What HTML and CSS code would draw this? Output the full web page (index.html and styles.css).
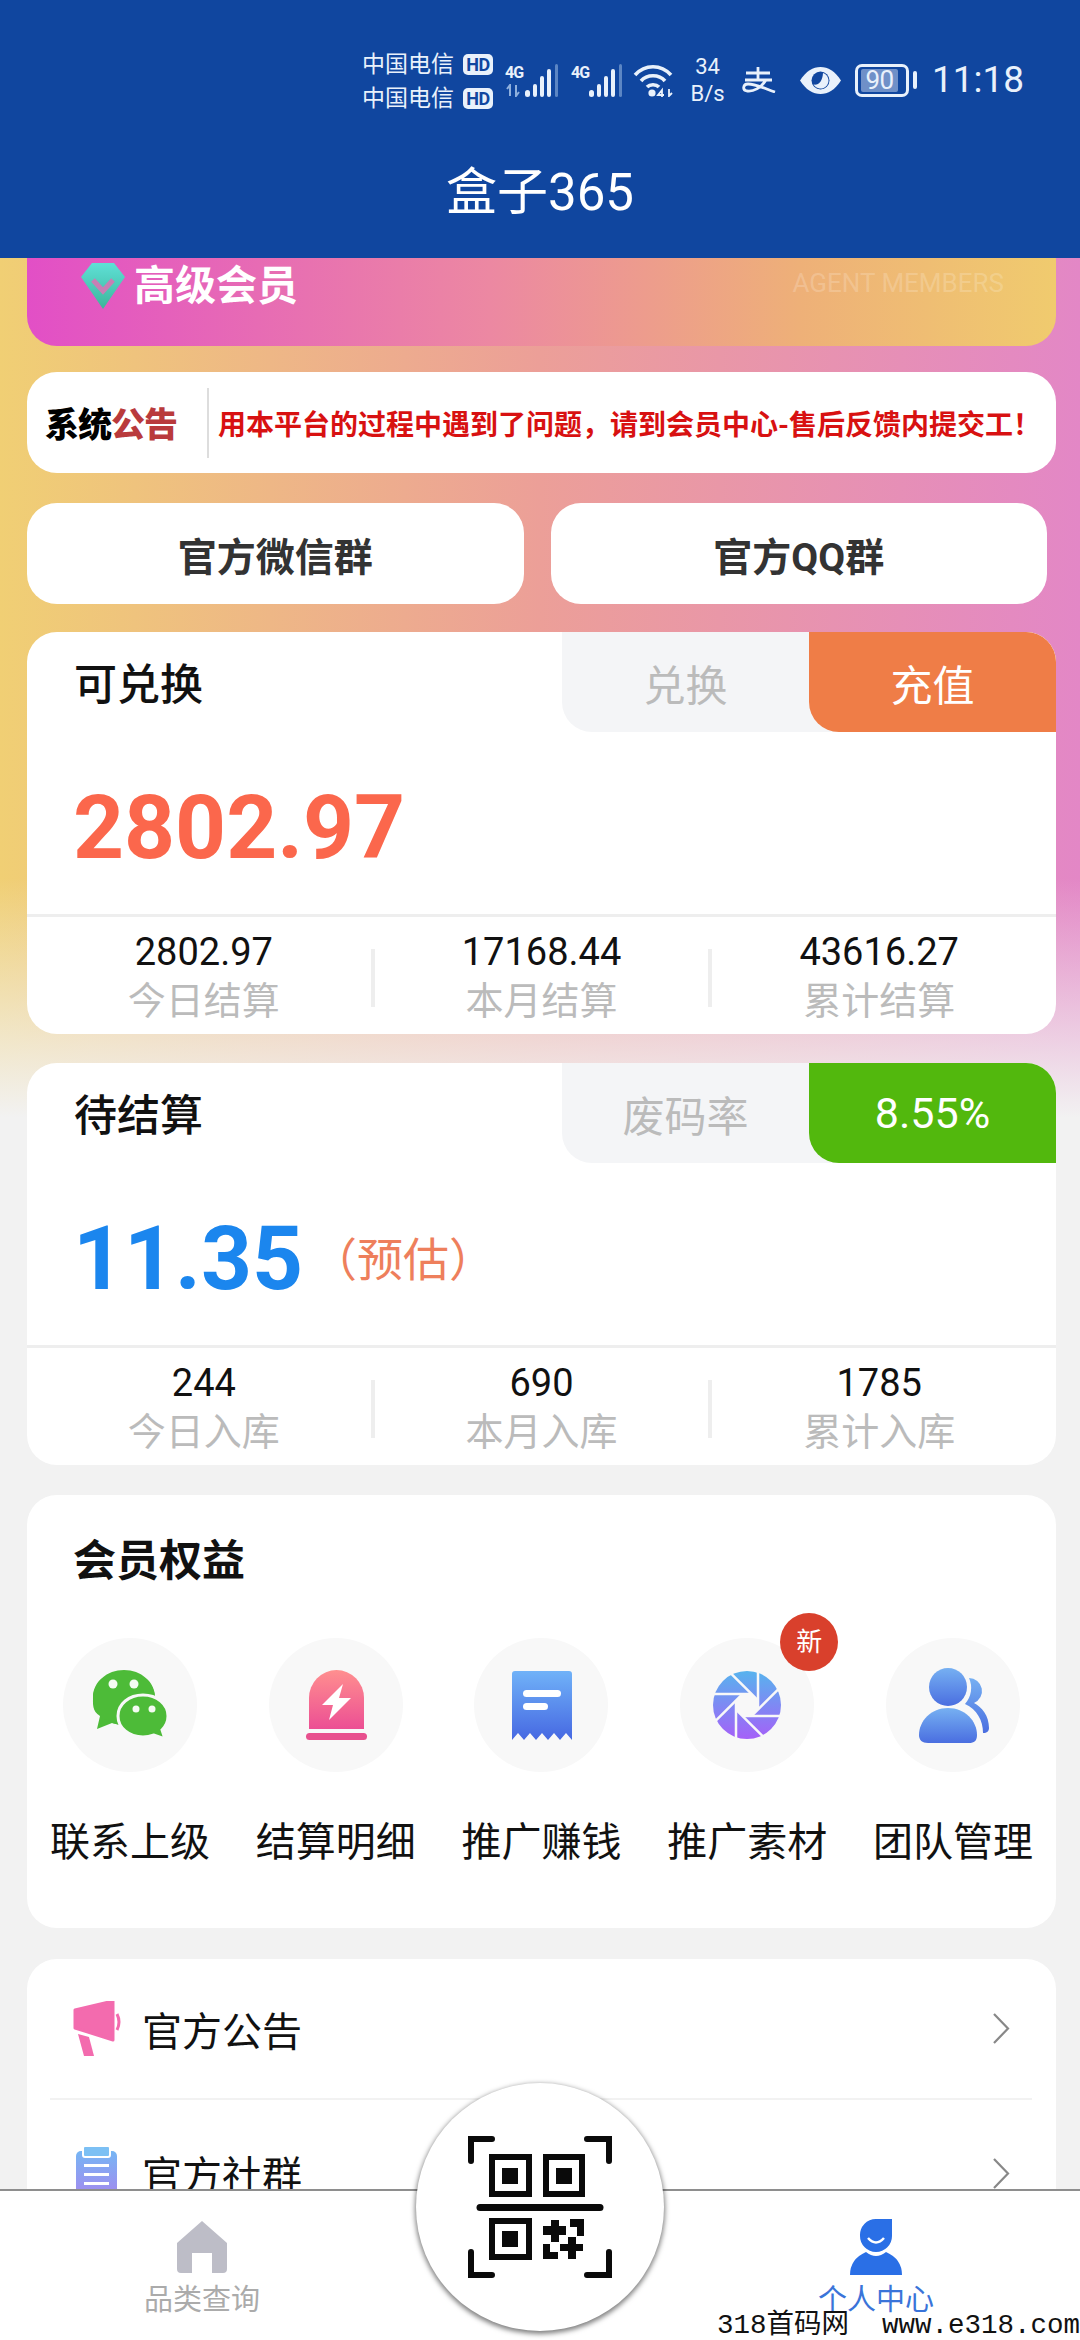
FILE: index.html
```html
<!DOCTYPE html>
<html lang="zh">
<head>
<meta charset="utf-8">
<title>盒子365</title>
<link rel="stylesheet" href="styles.css">
</head>
<body>
<div class="app">
  <header class="header">
    <div class="status">
      <div class="carriers">
        <div class="carrier"><span>中国电信</span><b class="hd">HD</b></div>
        <div class="carrier"><span>中国电信</span><b class="hd">HD</b></div>
      </div>
      <div class="sim">
        <div class="sim-tag"><span class="g4">4G</span>
          <svg class="arrows" width="19" height="13" viewBox="0 0 19 13"><path d="M5 12V1L2 5M11 1v11l3-4" fill="none" stroke="#8fb0dd" stroke-width="2"/></svg>
        </div>
        <svg class="bars" width="35" height="33" viewBox="0 0 35 33"><rect x="1" y="26" width="5" height="7" rx="2.5" fill="#e9f1fb"/><rect x="9" y="20" width="4" height="13" rx="2" fill="#e9f1fb"/><rect x="16" y="12" width="4" height="21" rx="2" fill="#e9f1fb"/><rect x="23" y="5" width="4" height="28" rx="2" fill="#e9f1fb"/><rect x="31" y="0" width="3" height="33" rx="1.5" fill="#5c86c4"/></svg>
      </div>
      <div class="sim sim-two">
        <div class="sim-tag"><span class="g4">4G</span></div>
        <svg class="bars" width="35" height="33" viewBox="0 0 35 33"><rect x="1" y="26" width="5" height="7" rx="2.5" fill="#e9f1fb"/><rect x="9" y="20" width="4" height="13" rx="2" fill="#e9f1fb"/><rect x="16" y="12" width="4" height="21" rx="2" fill="#e9f1fb"/><rect x="23" y="5" width="4" height="28" rx="2" fill="#e9f1fb"/><rect x="31" y="0" width="3" height="33" rx="1.5" fill="#5c86c4"/></svg>
      </div>
      <svg class="wifi" width="41" height="33" viewBox="0 0 41 33"><g fill="none" stroke="#e9f1fb" stroke-width="3.6"><path d="M2 11C12 0 28 0 38 11"/><path d="M8 17C14 10 26 10 32 17"/><path d="M14 23c3-3 9-3 12 0"/></g><circle cx="19" cy="29" r="3.6" fill="#e9f1fb"/><path d="M29 33v-7l-4 5h6M36 25v7l3-3" fill="none" stroke="#e9f1fb" stroke-width="1.8"/></svg>
      <div class="speed"><span>34</span><span>B/s</span></div>
      <svg class="pay" width="34" height="26" viewBox="0 0 34 26"><path d="M4 6H28M16 0V13M3 13H30M24 13C19 21 11 25 5 24 0 23 1 17 6 17 14 17 24 22 33 25" fill="none" stroke="#e9f1fb" stroke-width="2.800"/></svg>
      <svg class="eye" width="41" height="27" viewBox="0 0 41 27"><path d="M0 13.5C6 4 13 0 20.5 0S35 4 41 13.5C35 23 28 27 20.5 27S6 23 0 13.5Z" fill="#e9f1fb"/><circle cx="20.5" cy="13.5" r="9" fill="#10469f"/><path d="M23 6a8 8 0 1 1-9.500 11.500c5 1 9-3 9.500-11.500Z" fill="#e9f1fb"/></svg>
      <div class="battery"><div class="battery-box"><span class="battery-fill">90</span></div><i class="battery-nub"></i></div>
      <span class="time">11:18</span>
    </div>
    <h1 class="title">盒子365</h1>
  </header>

  <main class="content">
    <section class="member">
      <div class="member-name">
        <svg width="44" height="46" viewBox="0 0 44 46"><defs><linearGradient id="gem" x1="0" y1="0" x2="0" y2="1"><stop offset="0" stop-color="#5fe0d6"/><stop offset="1" stop-color="#3bb59a"/></linearGradient></defs><path d="M11 0H33L44 14 22 46 0 14Z" fill="url(#gem)"/><path d="M12 17l10 11 10-11" fill="none" stroke="#c77fb4" stroke-width="5"/></svg>
        <span>高级会员</span>
      </div>
      <span class="member-en">AGENT MEMBERS</span>
    </section>

    <section class="notice">
      <div class="notice-logo">系统<em>公告</em></div>
      <i class="notice-line"></i>
      <p class="notice-text">用本平台的过程中遇到了问题&#xFF0C;请到会员中心-售后反馈内提交工&#xFF01;</p>
    </section>

    <div class="groups">
      <a class="group">官方微信群</a>
      <a class="group">官方QQ群</a>
    </div>

    <section class="card">
      <div class="card-head">
        <h2 class="card-title">可兑换</h2>
        <div class="tabs"><span class="tab">兑换</span><span class="tab tab-on orange">充值</span></div>
      </div>
      <div class="amount"><span class="money red">2802.97</span></div>
      <div class="stats">
        <div class="stat"><b>2802.97</b><span>今日结算</span></div>
        <div class="stat"><b>17168.44</b><span>本月结算</span></div>
        <div class="stat"><b>43616.27</b><span>累计结算</span></div>
      </div>
    </section>

    <section class="card">
      <div class="card-head">
        <h2 class="card-title">待结算</h2>
        <div class="tabs"><span class="tab">废码率</span><span class="tab tab-on green">8.55%</span></div>
      </div>
      <div class="amount"><span class="money blue">11.35</span><span class="estimate">&#xFF08;预估&#xFF09;</span></div>
      <div class="stats">
        <div class="stat"><b>244</b><span>今日入库</span></div>
        <div class="stat"><b>690</b><span>本月入库</span></div>
        <div class="stat"><b>1785</b><span>累计入库</span></div>
      </div>
    </section>

    <section class="perks">
      <h2 class="perks-title">会员权益</h2>
      <div class="perk-grid">
        <div class="perk">
          <div class="perk-icon">
            <svg width="134" height="134" viewBox="0 0 134 134"><path d="M61 32c17 0 31 12 31 27 0 15-14 28-31 28-4 0-8-1-12-2l-15 6 3-13C29 73 30 66 30 59c0-15 14-27 31-27Z" fill="#4dbb38"/><ellipse cx="61" cy="60" rx="31" ry="27" fill="#4dbb38"/><circle cx="50" cy="46" r="4.500" fill="#f4fbf2"/><circle cx="71" cy="46" r="4.500" fill="#f4fbf2"/><path d="M102 101l-11-4c-3 1-7 2-11 2-14 0-25-9-25-21s11-21 25-21 25 9 25 21c0 6-3 11-6 14Z" fill="#4dbb38" stroke="#f8f8f8" stroke-width="3"/><circle cx="73" cy="71" r="3.500" fill="#f4fbf2"/><circle cx="89" cy="71" r="3.500" fill="#f4fbf2"/></svg>
          </div>
          <span class="perk-name">联系上级</span>
        </div>
        <div class="perk">
          <div class="perk-icon">
            <svg width="134" height="134" viewBox="0 0 134 134"><defs><linearGradient id="alarm" x1="0" y1="0" x2="0" y2="1"><stop offset="0" stop-color="#ff8f8f"/><stop offset="1" stop-color="#ec4f94"/></linearGradient></defs><path d="M40 91V60a27.500 28 0 0 1 55 0V91Z" fill="url(#alarm)"/><rect x="37" y="95" width="61" height="7" rx="3.500" fill="#e8508e"/><path d="M74 46L53 67H64L60 82 82 60H70Z" fill="#fff"/></svg>
          </div>
          <span class="perk-name">结算明细</span>
        </div>
        <div class="perk">
          <div class="perk-icon">
            <svg width="134" height="134" viewBox="0 0 134 134"><defs><linearGradient id="bill" x1="0" y1="0" x2="0" y2="1"><stop offset="0" stop-color="#70b2f8"/><stop offset="1" stop-color="#4668e2"/></linearGradient></defs><path d="M41 33H95a3 3 0 0 1 3 3V102L92 95 86 102 80 95 74 102 68 95 62 102 56 95 50 102 44 95 38 102V36a3 3 0 0 1 3-3Z" fill="url(#bill)"/><rect x="49" y="52" width="38" height="7" rx="3.500" fill="#fff"/><rect x="49" y="65" width="25" height="7" rx="3.500" fill="#fff"/></svg>
          </div>
          <span class="perk-name">推广赚钱</span>
        </div>
        <div class="perk">
          <div class="perk-icon">
            <svg width="134" height="134" viewBox="0 0 134 134"><defs><linearGradient id="lens" x1="0" y1="0" x2="0" y2="1"><stop offset="0" stop-color="#57b3ee"/><stop offset="1" stop-color="#a560f8"/></linearGradient></defs><circle cx="67" cy="67" r="34" fill="url(#lens)"/><g stroke="#f8f8f8" stroke-width="2.500"><path d="M78 71.500V30"/><path d="M78 71.500V30" transform="rotate(45 67 67)"/><path d="M78 71.500V30" transform="rotate(90 67 67)"/><path d="M78 71.500V30" transform="rotate(135 67 67)"/><path d="M78 71.500V30" transform="rotate(180 67 67)"/><path d="M78 71.500V30" transform="rotate(225 67 67)"/><path d="M78 71.500V30" transform="rotate(270 67 67)"/><path d="M78 71.500V30" transform="rotate(315 67 67)"/></g><path d="M78 71.550L71.550 78H62.450L56 71.550V62.450L62.450 56H71.550L78 62.450Z" fill="#f8f8f8"/></svg>
            <span class="badge">新</span>
          </div>
          <span class="perk-name">推广素材</span>
        </div>
        <div class="perk">
          <div class="perk-icon">
            <svg width="134" height="134" viewBox="0 0 134 134"><defs><linearGradient id="team" x1="0" y1="0" x2="0" y2="1"><stop offset="0" stop-color="#76b0f2"/><stop offset="1" stop-color="#4a6ee0"/></linearGradient></defs><path d="M83 40a13 13 0 0 1 5 25c8 4 15 13 15 25 0 3-2 5-6 5 0-12-6-24-18-29a24 24 0 0 0 4-26Z" fill="url(#team)"/><circle cx="62" cy="49" r="19" fill="url(#team)"/><path d="M33 97c0-14 12-27 29-27s29 13 29 27c0 6-3 8-8 8H42c-6 0-9-3-9-8Z" fill="url(#team)"/></svg>
          </div>
          <span class="perk-name">团队管理</span>
        </div>
      </div>
    </section>

    <section class="links">
      <div class="link-row">
        <div class="link-slot"><svg width="48" height="55" viewBox="0 0 48 55"><path d="M2 9L40 0V39L2 27Z" fill="#f36bae" stroke="#f36bae" stroke-width="3" stroke-linejoin="round"/><path d="M5 33L16 36 21 55H11Z" fill="#f36bae"/><path d="M44 13q4 8 0 16" fill="none" stroke="#f36bae" stroke-width="3"/></svg></div>
        <span class="link-name">官方公告</span>
        <svg class="chev" width="18" height="31" viewBox="0 0 18 31"><path d="M2 1L16 15.500 2 30" fill="none" stroke="#888" stroke-width="2.200"/></svg>
      </div>
      <div class="link-row">
        <div class="link-slot"><svg width="42" height="55" viewBox="0 0 42 55"><defs><linearGradient id="clip" x1="0" y1="0" x2="0" y2="1"><stop offset="0" stop-color="#76b6f4"/><stop offset="1" stop-color="#a884ee"/></linearGradient></defs><rect x="0" y="5" width="41" height="50" rx="5" fill="url(#clip)"/><rect x="7" y="0" width="27" height="11" rx="2" fill="#7cc0f4" stroke="#fff" stroke-width="2"/><g fill="#fff"><rect x="8" y="18" width="25" height="3"/><rect x="8" y="27" width="25" height="3"/><rect x="8" y="36" width="25" height="3"/></g></svg></div>
        <span class="link-name">官方社群</span>
        <svg class="chev" width="18" height="31" viewBox="0 0 18 31"><path d="M2 1L16 15.500 2 30" fill="none" stroke="#888" stroke-width="2.200"/></svg>
      </div>
    </section>
  </main>

  <nav class="tabbar">
    <div class="nav-item">
      <svg width="50" height="52" viewBox="0 0 50 52"><path d="M25 0L50 22V48q0 4-4 4H35V32H15V52H4q-4 0-4-4V22Z" fill="#bdbdc7"/></svg>
      <span>品类查询</span>
    </div>
    <div class="nav-item nav-active">
      <svg width="52" height="56" viewBox="0 0 52 56"><path d="M26 0H42V17A16 16 0 0 1 10 17 16 16 0 0 1 26 0Z" fill="#2a6fe6"/><path d="M18 19Q26 28 34 19" fill="none" stroke="#fff" stroke-width="2.500"/><path d="M16 33Q26 41 36 33 52 40 52 56H0Q0 40 16 33Z" fill="#2a6fe6"/></svg>
      <span>个人中心</span>
    </div>
    <div class="scan">
      <svg width="248" height="248" viewBox="0 0 248 248"><g fill="none" stroke="#0a0a0a" stroke-width="6" stroke-linecap="round"><path d="M55 78V56H76"/><path d="M171 56H193V78"/><path d="M55 169V192H76"/><path d="M171 192H193V169"/><path d="M64 124.500H184" stroke-width="7"/></g><g fill="none" stroke="#0a0a0a" stroke-width="6"><rect x="76" y="74" width="37" height="37"/><rect x="130" y="74" width="36" height="37"/><rect x="76" y="138" width="37" height="36"/></g><g fill="#0a0a0a"><rect x="86" y="85" width="16" height="16"/><rect x="140" y="85" width="16" height="16"/><rect x="86" y="148" width="16" height="16"/><rect x="127" y="143" width="23" height="9"/><rect x="135" y="137" width="8" height="22"/><rect x="154" y="136" width="14" height="8"/><rect x="161" y="136" width="7" height="17"/><rect x="144" y="161" width="23" height="7"/><rect x="152" y="154" width="8" height="22"/><rect x="127" y="161" width="7" height="15"/><rect x="127" y="169" width="15" height="7"/></g></svg>
    </div>
  </nav>
  <div class="watermark">318首码网  www.e318.com</div>
</div>
</body>
</html>
```
FILE: styles.css
```css
* { box-sizing: border-box; }
html, body { margin: 0; padding: 0; }
body { font-family: Roboto, "Noto Sans CJK SC", sans-serif; color: #111; background: #f2f2f2; }
h1, h2, p { margin: 0; font-weight: inherit; }
em { font-style: normal; }

.app { position: relative; width: 1080px; height: 2340px; display: flex; flex-direction: column; overflow: hidden; }

/* header */
.header { height: 258px; flex: none; background: #10469f; color: #fff; padding-top: 50px; }
.status { height: 60px; display: flex; align-items: center; padding-left: 362px; color: #e9f1fb; }
.carriers { width: 131px; display: flex; flex-direction: column; gap: 2px; padding-top: 3px; }
.carrier { height: 32px; display: flex; align-items: center; gap: 9px; font-size: 23px; line-height: 32px; }
.hd { width: 30px; height: 21px; border-radius: 5px; background: #e9f1fb; color: #10469f; font-size: 18px; line-height: 21px; text-align: center; letter-spacing: -.5px; }
.sim { margin-left: 12px; width: 54px; height: 33px; display: flex; }
.sim-two { margin-left: 12px; width: 52px; }
.sim-tag { width: 19px; display: flex; flex-direction: column; gap: 2px; }
.g4 { font-size: 16px; line-height: 18px; font-weight: 700; letter-spacing: -1px; }
.arrows { display: block; }
.bars { display: block; }
.sim-two .sim-tag { width: 17px; }
.wifi { margin-left: 10px; }
.speed { width: 35px; margin-left: 16px; display: flex; flex-direction: column; align-items: center; font-size: 22px; line-height: 27px; }
.pay { margin-left: 17px; flex: none; }
.eye { margin-left: 24px; flex: none; }
.battery { margin-left: 14px; display: flex; align-items: center; gap: 4px; }
.battery-box { width: 54px; height: 33px; border: 3px solid #e9f1fb; border-radius: 7px; padding: 2px 3px; }
.battery-fill { display: block; width: 37px; height: 23px; background: #6f90c8; border-radius: 2px; font-size: 26px; line-height: 23px; text-align: center; color: #e9f1fb; letter-spacing: -.5px; }
.battery-nub { display: block; width: 4px; height: 18px; border-radius: 2px; background: #e9f1fb; }
.time { margin-left: 15px; font-size: 37px; line-height: 40px; }
.title { margin-top: 51px; text-align: center; font-size: 51px; line-height: 64px; color: #fff; }

/* scrolled content */
.content { flex: 1; min-height: 0; overflow: hidden; padding: 0 24px 0 27px;
  background-color: #f2f2f2;
  background-image: linear-gradient(to bottom, rgba(242,242,242,0) 0, rgba(242,242,242,0) 620px, #f2f2f2 860px), linear-gradient(to right, #f0cf74 0, #ec9f98 50%, #e387c6 100%);
  background-size: 100% 860px; background-repeat: no-repeat; }

.member { height: 88px; display: flex; justify-content: space-between; padding: 5px 52px 0 54px; border-radius: 0 0 30px 30px;
  background: linear-gradient(to right, #e24fc6 0, #ec88a2 45%, #eeb078 75%, #f0cb6e 100%); }
.member-name { display: flex; align-items: flex-start; gap: 9px; color: #fff; font-size: 41px; font-weight: 700; line-height: 46px; }
.member-en { color: rgba(255,255,255,.2); font-size: 26px; line-height: 40px; }

.notice { margin-top: 26px; height: 101px; display: flex; align-items: center; background: #fff; border-radius: 30px; padding-left: 18px; overflow: hidden; }
.notice-logo { width: 162px; flex: none; font-size: 34px; font-weight: 900; color: #000; letter-spacing: -1px; }
.notice-logo em { color: #b93a3c; }
.notice-line { flex: none; width: 2px; height: 70px; background: #ddd; margin-right: 9px; }
.notice-text { width: 823px; flex: none; overflow: hidden; white-space: nowrap; color: #d81111; font-size: 28px; font-weight: 700; }

.groups { margin-top: 30px; margin-right: 9px; display: grid; grid-template-columns: 1fr 1fr; gap: 27px; }
.group { height: 101px; display: flex; align-items: center; justify-content: center; background: #fff; border-radius: 30px; font-size: 39px; font-weight: 700; color: #333; }

.card { margin-top: 28px; height: 402px; background: #fff; border-radius: 30px; overflow: hidden; display: flex; flex-direction: column; }
.card + .card { margin-top: 29px; }
.card-head { height: 100px; flex: none; display: flex; justify-content: space-between; }
.card-title { padding: 3px 0 0 47px; font-size: 43px; font-weight: 500; line-height: 100px; color: #111; }
.tabs { display: flex; background: #f4f5f7; border-bottom-left-radius: 30px; }
.tab { width: 247px; display: flex; align-items: center; justify-content: center; color: #bbb; font-size: 42px; }
.tab-on { color: #fff; border-bottom-left-radius: 30px; }
.orange { background: #ef7d47; }
.green { background: #52b80d; font-size: 43px; }
.amount { height: 182px; flex: none; display: flex; align-items: center; padding: 10px 0 0 46px; gap: 8px; }
.money { font-size: 89px; font-weight: 700; line-height: 100px; }
.red { color: #fb674c; }
.blue { color: #1b86ee; }
.estimate { font-size: 46px; margin-top: -6px; color: #ee7f5c; }
.stats { flex: 1; display: grid; grid-template-columns: repeat(3, 1fr); padding: 0 8px; border-top: 3px solid #eee; }
.stat { position: relative; display: flex; flex-direction: column; align-items: center; padding-top: 12px; }
.stat + .stat::before { content: ""; position: absolute; left: -2px; top: 32px; width: 4px; height: 58px; background: #eee; }
.stat b { font-size: 38px; font-weight: 400; line-height: 46px; color: #111; }
.stat span { font-size: 38px; line-height: 53px; color: #bbb; }

.perks { margin-top: 30px; height: 433px; background: #fff; border-radius: 30px; }
.perks-title { padding: 39px 0 0 46px; font-size: 43px; font-weight: 700; line-height: 54px; color: #111; }
.perk-grid { margin-top: 50px; display: grid; grid-template-columns: repeat(5, 1fr); }
.perk { display: flex; flex-direction: column; align-items: center; gap: 44px; }
.perk-icon { position: relative; width: 134px; height: 134px; border-radius: 50%; background: #f8f8f8; }
.perk-icon svg { display: block; }
.badge { position: absolute; left: 100px; top: -25px; width: 58px; height: 58px; border-radius: 50%; background: #d9402c; color: #fff; font-size: 26px; line-height: 58px; text-align: center; }
.perk-name { font-size: 40px; line-height: 54px; color: #111; }

.links { margin-top: 31px; height: 300px; background: #fff; border-radius: 30px 30px 0 0; padding: 0 24px 0 23px; }
.link-row { position: relative; height: 141px; display: flex; align-items: center; border-bottom: 2px solid #f2f2f2; }
.link-row + .link-row { border-bottom: 0; height: 146px; }
.link-slot { flex: none; width: 48px; margin-left: 23px; display: flex; justify-content: center; }
.link-slot svg { display: block; }
.link-name { margin-left: 21px; font-size: 40px; color: #111; }
.chev { margin-left: auto; margin-right: 22px; }

/* bottom bar */
.tabbar { position: relative; height: 151px; flex: none; display: flex; justify-content: space-between; padding: 30px 145px 0 143px; background: #fff; border-top: 2px solid #8e8e8e; }
.nav-item { width: 118px; display: flex; flex-direction: column; align-items: center; gap: 7px; font-size: 29px; line-height: 40px; color: #ababab; }
.nav-item svg { display: block; }
.nav-active { gap: 5px; margin-top: -2px; color: #3a74d9; }
.scan { position: absolute; left: 416px; top: -108px; width: 248px; height: 248px; border-radius: 50%; background: #fff; box-shadow: 0 2px 5px 1px rgba(0,0,0,.5); }
.scan svg { display: block; }

.watermark { position: absolute; right: 0; bottom: -4px; font-family: "Liberation Mono", "Noto Sans CJK SC", monospace; font-size: 27.500px; line-height: 36px; white-space: pre; color: #111; }
```
